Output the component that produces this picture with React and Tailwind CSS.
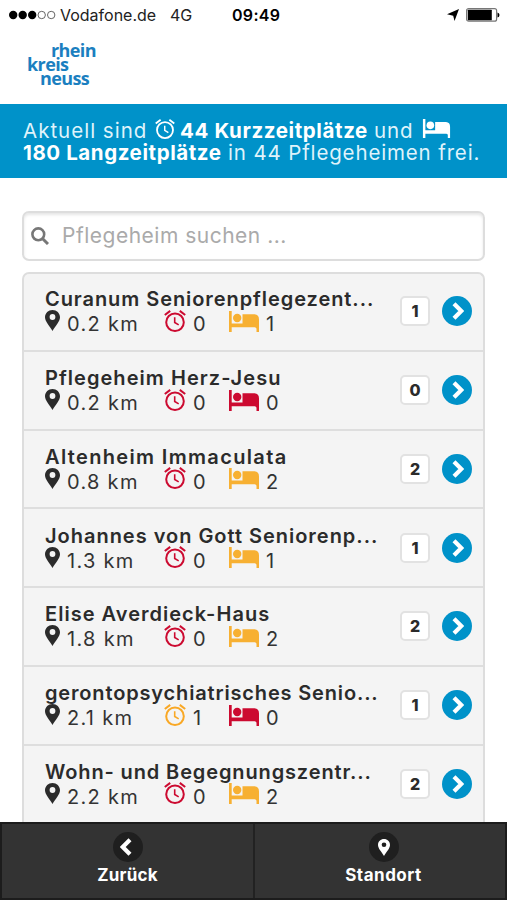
const HOMES = [
  { name: 'Curanum Seniorenpflegezent...', track: 'tracking-[0.93px]', km: '0.2 km', short: 0, long: 1 },
  { name: 'Pflegeheim Herz-Jesu', track: 'tracking-[1.05px]', km: '0.2 km', short: 0, long: 0 },
  { name: 'Altenheim Immaculata', track: 'tracking-[1.34px]', km: '0.8 km', short: 0, long: 2 },
  { name: 'Johannes von Gott Seniorenp...', track: 'tracking-[0.98px]', km: '1.3 km', short: 0, long: 1 },
  { name: 'Elise Averdieck-Haus', track: 'tracking-[1.02px]', km: '1.8 km', short: 0, long: 2 },
  { name: 'gerontopsychiatrisches Senio...', track: 'tracking-[0.84px]', km: '2.1 km', short: 1, long: 0 },
  { name: 'Wohn- und Begegnungszentr...', track: 'tracking-[0.87px]', km: '2.2 km', short: 0, long: 2 },
];

function Alarm({ className }) {
  return (
    <svg viewBox="0 0 22 22" className={className} fill="none" stroke="currentColor">
      <circle cx="11" cy="12.2" r="8.8" strokeWidth="2" />
      <path d="M10.7 7.3v5.2l4 2.4" strokeWidth="1.6" />
      <path d="M.8 5 6.200 .9M21.200 5 15.800 .9" strokeWidth="2" />
    </svg>
  );
}

function Bed({ className }) {
  return (
    <svg viewBox="0 0 30 21" className={className} fill="currentColor">
      <path d="M0 0h2.700v12.500H13.500V3.200H25.500q4.500 .3 4.500 5.300V21h-2.500v-3.200q-.2-1.500-1.800-1.500H2.700V21H0z" />
      <circle cx="8.200" cy="7" r="4.200" />
    </svg>
  );
}

function Pin({ className, hole }) {
  return (
    <svg viewBox="0 0 15 21" className={className}>
      <path d="M7.500 0C3.300 0 0 3.200 0 7.300 0 11.500 4.500 16 7.500 21 10.500 16 15 11.500 15 7.300 15 3.200 11.700 0 7.500 0z" fill="currentColor" />
      <circle cx="7.500" cy="7" r="2.900" className={hole} />
    </svg>
  );
}

function Chevron({ className }) {
  return (
    <svg viewBox="0 0 12 18" className={className} fill="none" stroke="currentColor" strokeWidth="4.200">
      <path d="M2 1.700l7.300 7.300L2 16.300" />
    </svg>
  );
}

function StatusBar() {
  return (
    <div className="flex h-[30px] items-center pl-[9px] pr-[7px] text-black">
      <svg viewBox="0 0 47 10" className="h-[10px] w-[47px]">
        <circle cx="4.200" cy="5" r="4.200" />
        <circle cx="13.700" cy="5" r="4.200" />
        <circle cx="23.200" cy="5" r="4.200" />
        <circle cx="32.700" cy="5" r="3.700" fill="none" stroke="#555" strokeWidth="0.900" />
        <circle cx="42.200" cy="5" r="3.700" fill="none" stroke="#555" strokeWidth="0.900" />
      </svg>
      <span className="ml-[4px] w-[110px] text-[16px] text-[#222]">Vodafone.de</span>
      <span className="w-[62px] text-[16px] text-[#222]">4G</span>
      <span className="text-[16px] font-semibold tracking-[0.300px]">09:49</span>
      <svg viewBox="0 0 12 12" className="ml-auto h-[12px] w-[12px]">
        <path d="M12 0 7.500 12 6.200 6.800 0 5.300z" />
      </svg>
      <svg viewBox="0 0 34 14" className="ml-[7px] h-[14px] w-[34px]">
        <rect x="0.600" y="0.600" width="30" height="12.600" rx="2" fill="white" stroke="#777" strokeWidth="1.200" />
        <rect x="1.800" y="1.800" width="24" height="10.400" rx="0.500" />
        <path d="M31.500 4.500q2 .5 2 2.500t-2 2.500z" />
      </svg>
    </div>
  );
}

function Row({ home }) {
  return (
    <li className="flex h-[78.750px] shrink-0 items-center border-b-2 border-[#dedede] pl-[21px] pr-[11px] first:-mt-px">
      <div className="flex-1 pt-px">
        <div className={`h-[23px] whitespace-nowrap text-[20px] leading-[24px] font-semibold text-[#2b2b2b] ${home.track}`}>
          {home.name}
        </div>
        <div className="flex h-[26px] items-center text-[20px] leading-[26px] text-[#333]">
          <Pin className="mb-[5px] h-[21px] w-[15px] text-[#2b2b2b]" hole="fill-[#f4f4f4]" />
          <span className="ml-[7px] w-[97px] pt-[2px] tracking-[1.300px]">{home.km}</span>
          <Alarm className={`mb-[5px] h-[22px] w-[22px] ${home.short ? 'text-[#f9a825]' : 'text-[#cc0a30]'}`} />
          <span className="ml-[7px] w-[36px] pt-[2px]">{home.short}</span>
          <Bed className={`mb-[4px] h-[21px] w-[30px] ${home.long ? 'text-[#f7b032]' : 'text-[#cc0a30]'}`} />
          <span className="ml-[7px] pt-[2px]">{home.long}</span>
        </div>
      </div>
      <span className="flex h-[30px] w-[30px] items-center justify-center rounded-[5px] border-2 border-[#e2e2e2] bg-white text-[16px] font-extrabold text-[#2b2b2b]">
        {home.long + home.short}
      </span>
      <span className="ml-[12px] flex h-[30px] w-[30px] items-center justify-center rounded-full bg-[#0092c9] text-white">
        <Chevron className="ml-[2px] h-[18px] w-[12px]" />
      </span>
    </li>
  );
}

export default function App() {
  return (
    <div className="flex h-[900px] w-[507px] flex-col overflow-hidden bg-white font-[Inter,sans-serif]">
      <header className="h-[104px] shrink-0">
        <StatusBar />
        <div className="pl-[27px] pt-[12.500px] font-['Open_Sans',sans-serif] text-[18px] leading-[14.300px] font-bold tracking-[-0.600px] text-[#1b7fc0]">
          <div className="pl-[24px]">rhein</div>
          <div>kreis</div>
          <div className="pl-[13px]">neuss</div>
        </div>
      </header>
      <section className="h-[74px] shrink-0 bg-[#0092c9] pl-[23px] pt-[16px] text-[20.500px] leading-[22px] text-white">
        <div className="flex h-[22px] items-center whitespace-nowrap">
          <span className="w-[132px] tracking-[1px] text-[#dff3fb]">Aktuell sind</span>
          <Alarm className="mb-[5px] h-[20px] w-[20px]" />
          <b className="ml-[5px] w-[194px] font-bold tracking-[0.610px]">44 Kurzzeitplätze</b>
          <span className="w-[48px] tracking-[0.850px] text-[#dff3fb]">und</span>
          <Bed className="mb-[5px] h-[19px] w-[29px]" />
        </div>
        <div className="flex h-[22px] whitespace-nowrap">
          <b className="w-[205px] font-bold tracking-[0.580px]">180 Langzeitplätze</b>
          <span className="tracking-[0.850px] text-[#dff3fb]">in 44 Pflegeheimen frei.</span>
        </div>
      </section>
      <main className="flex min-h-0 flex-1 flex-col overflow-hidden px-[22px] pt-[33px]">
        <div className="flex h-[50px] w-[463px] shrink-0 items-center rounded-[7px] border-2 border-[#ddd] bg-white pl-[7px] shadow-[inset_0_2px_3px_rgba(0,0,0,0.1)]">
          <svg viewBox="0 0 18 18" className="h-[18px] w-[18px]" fill="none" stroke="#777" strokeWidth="2.600">
            <circle cx="7.300" cy="7.300" r="5.900" />
            <path d="M11.700 11.700l5.300 5.300" strokeWidth="3" />
          </svg>
          <span className="ml-[13px] text-[21px] tracking-[0.500px] text-[#aaa]">Pflegeheim suchen ...</span>
        </div>
        <ul className="mt-[11px] flex w-[463px] flex-col rounded-t-[7px] border-2 border-b-0 border-[#ddd] bg-[#f4f4f4]">
          {HOMES.map((home) => (
            <Row key={home.name} home={home} />
          ))}
        </ul>
      </main>
      <nav className="flex h-[78px] shrink-0 border-2 border-[#1c1c1c] bg-[#333] text-[17px] font-bold tracking-[0.250px] text-white">
        <div className="flex w-[253px] flex-col items-center border-r-2 border-[#222] pt-[8px]">
          <span className="flex h-[30px] w-[30px] items-center justify-center rounded-full bg-[#1f1f1f]">
            <Chevron className="mr-[3px] h-[18px] w-[12px] rotate-180" />
          </span>
          <span className="mt-[2px] leading-[22px]">Zurück</span>
        </div>
        <div className="flex flex-1 flex-col items-center pl-[7px] pt-[8px]">
          <span className="flex h-[30px] w-[30px] items-center justify-center rounded-full bg-[#1f1f1f]">
            <Pin className="h-[19px] w-[12px]" hole="fill-[#1f1f1f]" />
          </span>
          <span className="mt-[2px] leading-[22px] tracking-[0.500px]">Standort</span>
        </div>
      </nav>
    </div>
  );
}
